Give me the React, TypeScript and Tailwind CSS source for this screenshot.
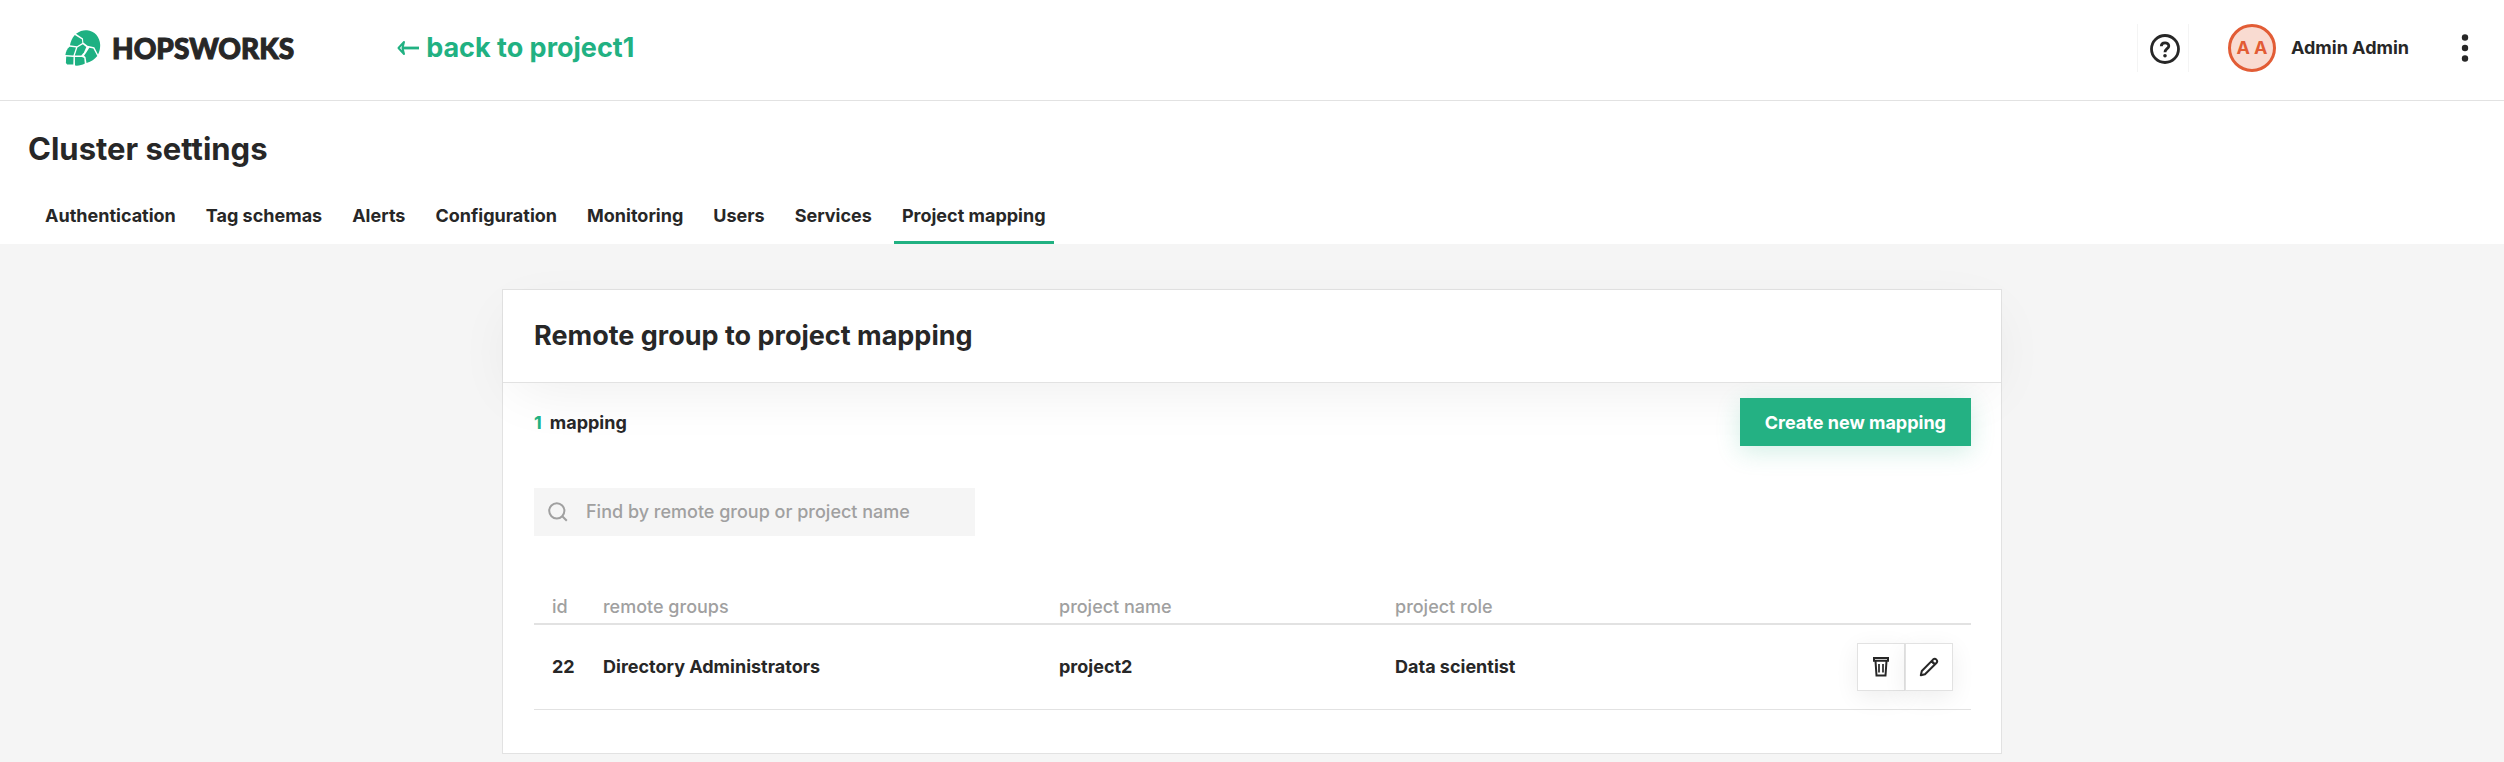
import React from "react";

const tabs = ["Authentication", "Tag schemas", "Alerts", "Configuration", "Monitoring", "Users", "Services", "Project mapping"];

function LogoMark() {
  return (
    <svg viewBox="0 0 36 36" className="size-9" fill="#1eb182" aria-hidden="true">
      <path d="M11 3.800C15 .8 18.500 0 22 .3C29.500 1 35 7 35.200 15C35.200 18.500 34.500 21.500 33 24.500L29.300 17.300L22.500 15.800L18.300 12.500L18 8.500Z" />
      <path d="M9.800 5L17 9.600L17.300 13L12 16.200L5 15.300C5.500 11.500 7.300 7.800 9.800 5Z" />
      <path d="M4.600 16.700L11 17.600L8.400 25.500L.4 25C.8 21.500 2.300 18.500 4.600 16.700Z" />
      <path d="M12.400 17.500L17.800 14.300L21.300 17L19 22.300L16.300 25.500L9.800 25.600Z" />
      <path d="M24.300 17.700L28.300 18.600L32.300 26C29.500 29.500 26.500 31.500 21.500 33L20.500 27L19 25.700L21.300 22.500Z" />
      <path d="M1.200 26.500L8.500 27L8.300 34.500H2.200L.9 33Z" />
      <path d="M9.900 27L17 27L19.200 28L19.800 33.500C17 35.200 13.500 35.900 10 35.600Z" />
    </svg>
  );
}

export default function App() {
  return (
    <div className="min-h-screen bg-[#f5f5f5] font-['Inter',sans-serif] text-lg leading-6 font-bold text-[#272727]">
      <header className="flex h-[101px] items-start border-b border-[#e2e2e2] bg-white pt-6">
        <a href="#home" className="ml-[65px] flex h-12 items-center gap-[11px] font-['Lato',sans-serif] text-[28px] leading-none font-black [-webkit-text-stroke:1px_#272727]">
          <LogoMark />
          HOPSWORKS
        </a>
        <a href="#project1" className="ml-[103px] flex h-12 items-center gap-[7px] text-[27px] text-[#21b182]">
          <svg viewBox="0 0 22 16" className="h-4 w-[22px]" fill="none" stroke="#21b182" aria-hidden="true">
            <path d="M1.500 8L7 2L5.500 8L7 14Z" strokeWidth="2" strokeLinejoin="round" />
            <path d="M5 8H22" strokeWidth="2.800" />
          </svg>
          back to project1
        </a>
        <div className="ml-auto flex h-12 items-center pr-[23px]">
          <button aria-label="Help" className="flex h-12 w-[52px] items-center justify-center border-x border-[#f4f4f4] pl-1 pt-0.5">
            <svg viewBox="0 0 30 30" className="size-[30px]" fill="none" stroke="#272727" strokeWidth="2.800">
              <circle cx="15" cy="15" r="13.500" />
              <path d="M11.300 12.300C11.300 7.700 18.800 7.700 18.800 12C18.800 14.700 15 14.800 15 18.300" />
              <circle cx="15" cy="21.800" r="1.800" fill="#272727" stroke="none" />
            </svg>
          </button>
          <span className="ml-[39px] flex size-12 items-center justify-center rounded-full border-3 border-[#e25c35] bg-[#f9dbd1] text-[#e25c35]">A A</span>
          <span className="ml-[15px]">Admin Admin</span>
          <button aria-label="Menu" className="ml-10 flex h-12 w-8 items-center justify-center">
            <svg viewBox="0 0 8 30" className="h-[30px] w-2" fill="#272727">
              <circle cx="4" cy="4.500" r="3.200" />
              <circle cx="4" cy="15" r="3.200" />
              <circle cx="4" cy="25.500" r="3.200" />
            </svg>
          </button>
        </div>
      </header>
      <section className="bg-white pt-7">
        <h1 className="px-7 text-[31px] leading-10">Cluster settings</h1>
        <nav className="mt-8 flex gap-[14px] px-[37px]">
          {tabs.map((t) => (
            <a key={t} href="#tab" className={t === "Project mapping" ? "h-[43px] border-b-3 border-[#21b182] px-2 pt-[3px]" : "h-[43px] px-2 pt-[3px]"}>{t}</a>
          ))}
        </nav>
      </section>
      <main className="px-6 pt-[45px] pb-2">
        <section className="mx-auto max-w-[1500px] border border-[#e2e2e2] bg-white">
          <div className="border-b border-[#e2e2e2] px-[31px] py-7 shadow-[0_16px_60px_-12px_rgba(0,0,0,0.08)]">
            <h2 className="text-[27px] leading-9">Remote group to project mapping</h2>
          </div>
          <div className="pt-[15px] pr-[30px] pb-[43px] pl-[31px]">
            <div className="flex items-center justify-between">
              <p className="pt-0.5"><span className="mr-2 text-[#21b182]">1</span>mapping</p>
              <button className="h-12 bg-[#24b183] px-[25px] pt-0.5 text-white shadow-[0_6px_24px_rgba(33,177,130,0.2)]">Create new mapping</button>
            </div>
            <label className="mt-[42px] flex h-12 w-[441px] items-center bg-[#f5f5f5] pl-[14px]">
              <svg viewBox="0 0 20 20" className="size-5 shrink-0" fill="none" stroke="#a0a0a0" strokeWidth="2" aria-hidden="true">
                <circle cx="8.800" cy="8.800" r="7.600" />
                <path d="M14 14L18.800 18.800" />
              </svg>
              <input aria-label="Find mapping" placeholder="Find by remote group or project name" className="ml-[18px] min-w-0 flex-1 bg-transparent font-medium outline-none placeholder:text-[#a0a0a0]" />
            </label>
            <table className="mt-[59px] w-full table-fixed text-left">
              <colgroup>
                <col className="w-[60px]" />
                <col className="w-[456px]" />
                <col className="w-[336px]" />
                <col />
                <col className="w-[140px]" />
              </colgroup>
              <thead>
                <tr className="h-[29px] border-b-2 border-[#e2e2e2] align-top text-[#a0a0a0]">
                  <th className="pl-[18px] font-medium">id</th>
                  <th className="pl-[9px] font-medium">remote groups</th>
                  <th className="pl-[9px] font-medium">project name</th>
                  <th className="pl-[9px] font-medium">project role</th>
                  <th aria-label="actions" />
                </tr>
              </thead>
              <tbody>
                <tr className="h-[85px] border-b border-[#e2e2e2]">
                  <td className="pl-[18px]">22</td>
                  <td className="pl-[9px]">Directory Administrators</td>
                  <td className="pl-[9px]">project2</td>
                  <td className="pl-[9px]">Data scientist</td>
                  <td className="pr-[18px]">
                    <div className="flex justify-end">
                      <button aria-label="Delete" className="flex size-12 items-center justify-center border border-[#e2e2e2] bg-white shadow-[0_6px_24px_rgba(0,0,0,0.07)]">
                        <svg viewBox="0 0 18 21" className="h-[21px] w-[18px]" fill="none" stroke="#272727" strokeWidth="2">
                          <path d="M2 2H16V4.800H2ZM3.500 5L4.500 19.500H13.500L14.500 5" />
                          <path d="M7 8V16.500M11 8V16.500" strokeWidth="1.700" />
                        </svg>
                      </button>
                      <button aria-label="Edit" className="flex size-12 items-center justify-center border border-[#e2e2e2] bg-white shadow-[0_6px_24px_rgba(0,0,0,0.07)]">
                        <svg viewBox="0 0 20 20" className="size-5" fill="none" stroke="#272727" strokeWidth="2" strokeLinejoin="round">
                          <path d="M1.800 18.200L2.800 14L14 2.600Q15.800 1 17.400 2.600T17.400 6L6 17.200ZM13 3.500Q13.500 6.500 16.500 7" />
                        </svg>
                      </button>
                    </div>
                  </td>
                </tr>
              </tbody>
            </table>
          </div>
        </section>
      </main>
    </div>
  );
}
